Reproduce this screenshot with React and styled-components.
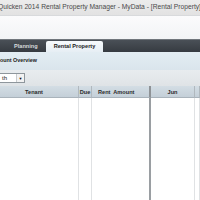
import React from "react";
import styled, { createGlobalStyle } from "styled-components";

const Global = createGlobalStyle`
  html, body { margin: 0; padding: 0; background: #fff; overflow: hidden; }
  body { font-family: "Liberation Sans", Arial, sans-serif; }
`;

const Window = styled.div`
  width: 200px;
  height: 200px;
  display: flex;
  flex-direction: column;
  overflow: hidden;
`;

const TitleBar = styled.div`
  height: 15px;
  flex: none;
  background: linear-gradient(#ececec, #e2e2e2);
  color: #4a4a4a;
  font-size: 6.7px;
  line-height: 14px;
  white-space: nowrap;
  margin-left: -2px;
`;

const Toolbar = styled.div`
  height: 23px;
  flex: none;
  border-top: 1px solid #d8dadc;
  background: linear-gradient(#fbfbfc, #f2f4f6);
`;

const TabBar = styled.div`
  height: 12px;
  flex: none;
  display: flex;
  align-items: flex-end;
  background: linear-gradient(#4a5057, #363b41);
  border-top: 1px solid #70767c;
  padding-left: 9px;
  gap: 3px;
`;

const Tab = styled.div`
  height: ${p => (p.$active ? "11px" : "12px")};
  padding: 0 ${p => (p.$active ? "8px" : "5px")};
  font-size: 5.6px;
  font-weight: bold;
  line-height: ${p => (p.$active ? "11px" : "12px")};
  color: ${p => (p.$active ? "#1c1c1c" : "#d6dadd")};
  background: ${p => (p.$active ? "linear-gradient(#f7fafc, #e6eef4)" : "transparent")};
  border-radius: ${p => (p.$active ? "2px 2px 0 0" : "0")};
  white-space: nowrap;
`;

const Heading = styled.div`
  height: 18px;
  flex: none;
  background: linear-gradient(#e3edf3, #dae5ec);
  font-size: 5.4px;
  font-weight: bold;
  color: #222;
  line-height: 16px;
  margin-left: -10px;
  white-space: nowrap;
`;

const FilterRow = styled.div`
  height: 16px;
  flex: none;
  background: linear-gradient(#e8ecef, #dfe3e6);
  display: flex;
  align-items: center;
`;

const Select = styled.div`
  width: 26px;
  height: 10px;
  margin-left: -1px;
  background: #fff;
  border: 1px solid #8e969c;
  display: flex;
  align-items: center;
  justify-content: space-between;
  font-size: 6px;
  color: #222;
  box-sizing: border-box;
  padding-left: 2px;
`;

const Arrow = styled.span`
  width: 7px;
  height: 8px;
  border-left: 1px solid #c7cbce;
  background: #f2f2f2;
  display: flex;
  align-items: center;
  justify-content: center;
  font-size: 4px;
  color: #111;
`;

const Grid = styled.div`
  flex: 1;
  display: grid;
  grid-template-columns: 79px 13px 59px 44px 5px;
  grid-template-rows: 12px 1fr;
`;

const HeadCell = styled.div`
  background: linear-gradient(#d3dde4, #c4cfd8);
  border-bottom: 1px solid #a9b3bb;
  border-right: ${p => p.$thick ? "2px solid #8e9296" : "1px solid #b0b8be"};
  font-size: 5.6px;
  font-weight: bold;
  color: #2a2a2a;
  display: flex;
  align-items: center;
  justify-content: ${p => p.$left ? "flex-start" : "center"};
  padding-left: ${p => p.$left ? "6px" : "0"};
  padding-right: ${p => p.$pr || 0}px;
  white-space: pre;
  overflow: hidden;
`;

const BodyCell = styled.div`
  background: #fff;
  border-right: ${p => p.$thick ? "2px solid #9a9ea2" : "1px solid #e0e2e4"};
`;

export default function App() {
  const cols = [
    { label: "Tenant", pr: 10 },
    { label: "Due" },
    { label: "Rent  Amount", left: true, thick: true },
    { label: "Jun" },
    { label: "" },
  ];
  return (
    <Window>
      <Global />
      <TitleBar>Quicken 2014 Rental Property Manager - MyData - [Rental Property]</TitleBar>
      <Toolbar />
      <TabBar>
        <Tab>Planning</Tab>
        <Tab $active>Rental Property</Tab>
      </TabBar>
      <Heading>Account Overview</Heading>
      <FilterRow>
        <Select>
          th
          <Arrow>▼</Arrow>
        </Select>
      </FilterRow>
      <Grid>
        {cols.map((c, i) => (
          <HeadCell key={"h" + i} $left={c.left} $thick={c.thick} $pr={c.pr}>
            {c.label}
          </HeadCell>
        ))}
        {cols.map((c, i) => (
          <BodyCell key={"b" + i} $thick={c.thick} />
        ))}
      </Grid>
    </Window>
  );
}
